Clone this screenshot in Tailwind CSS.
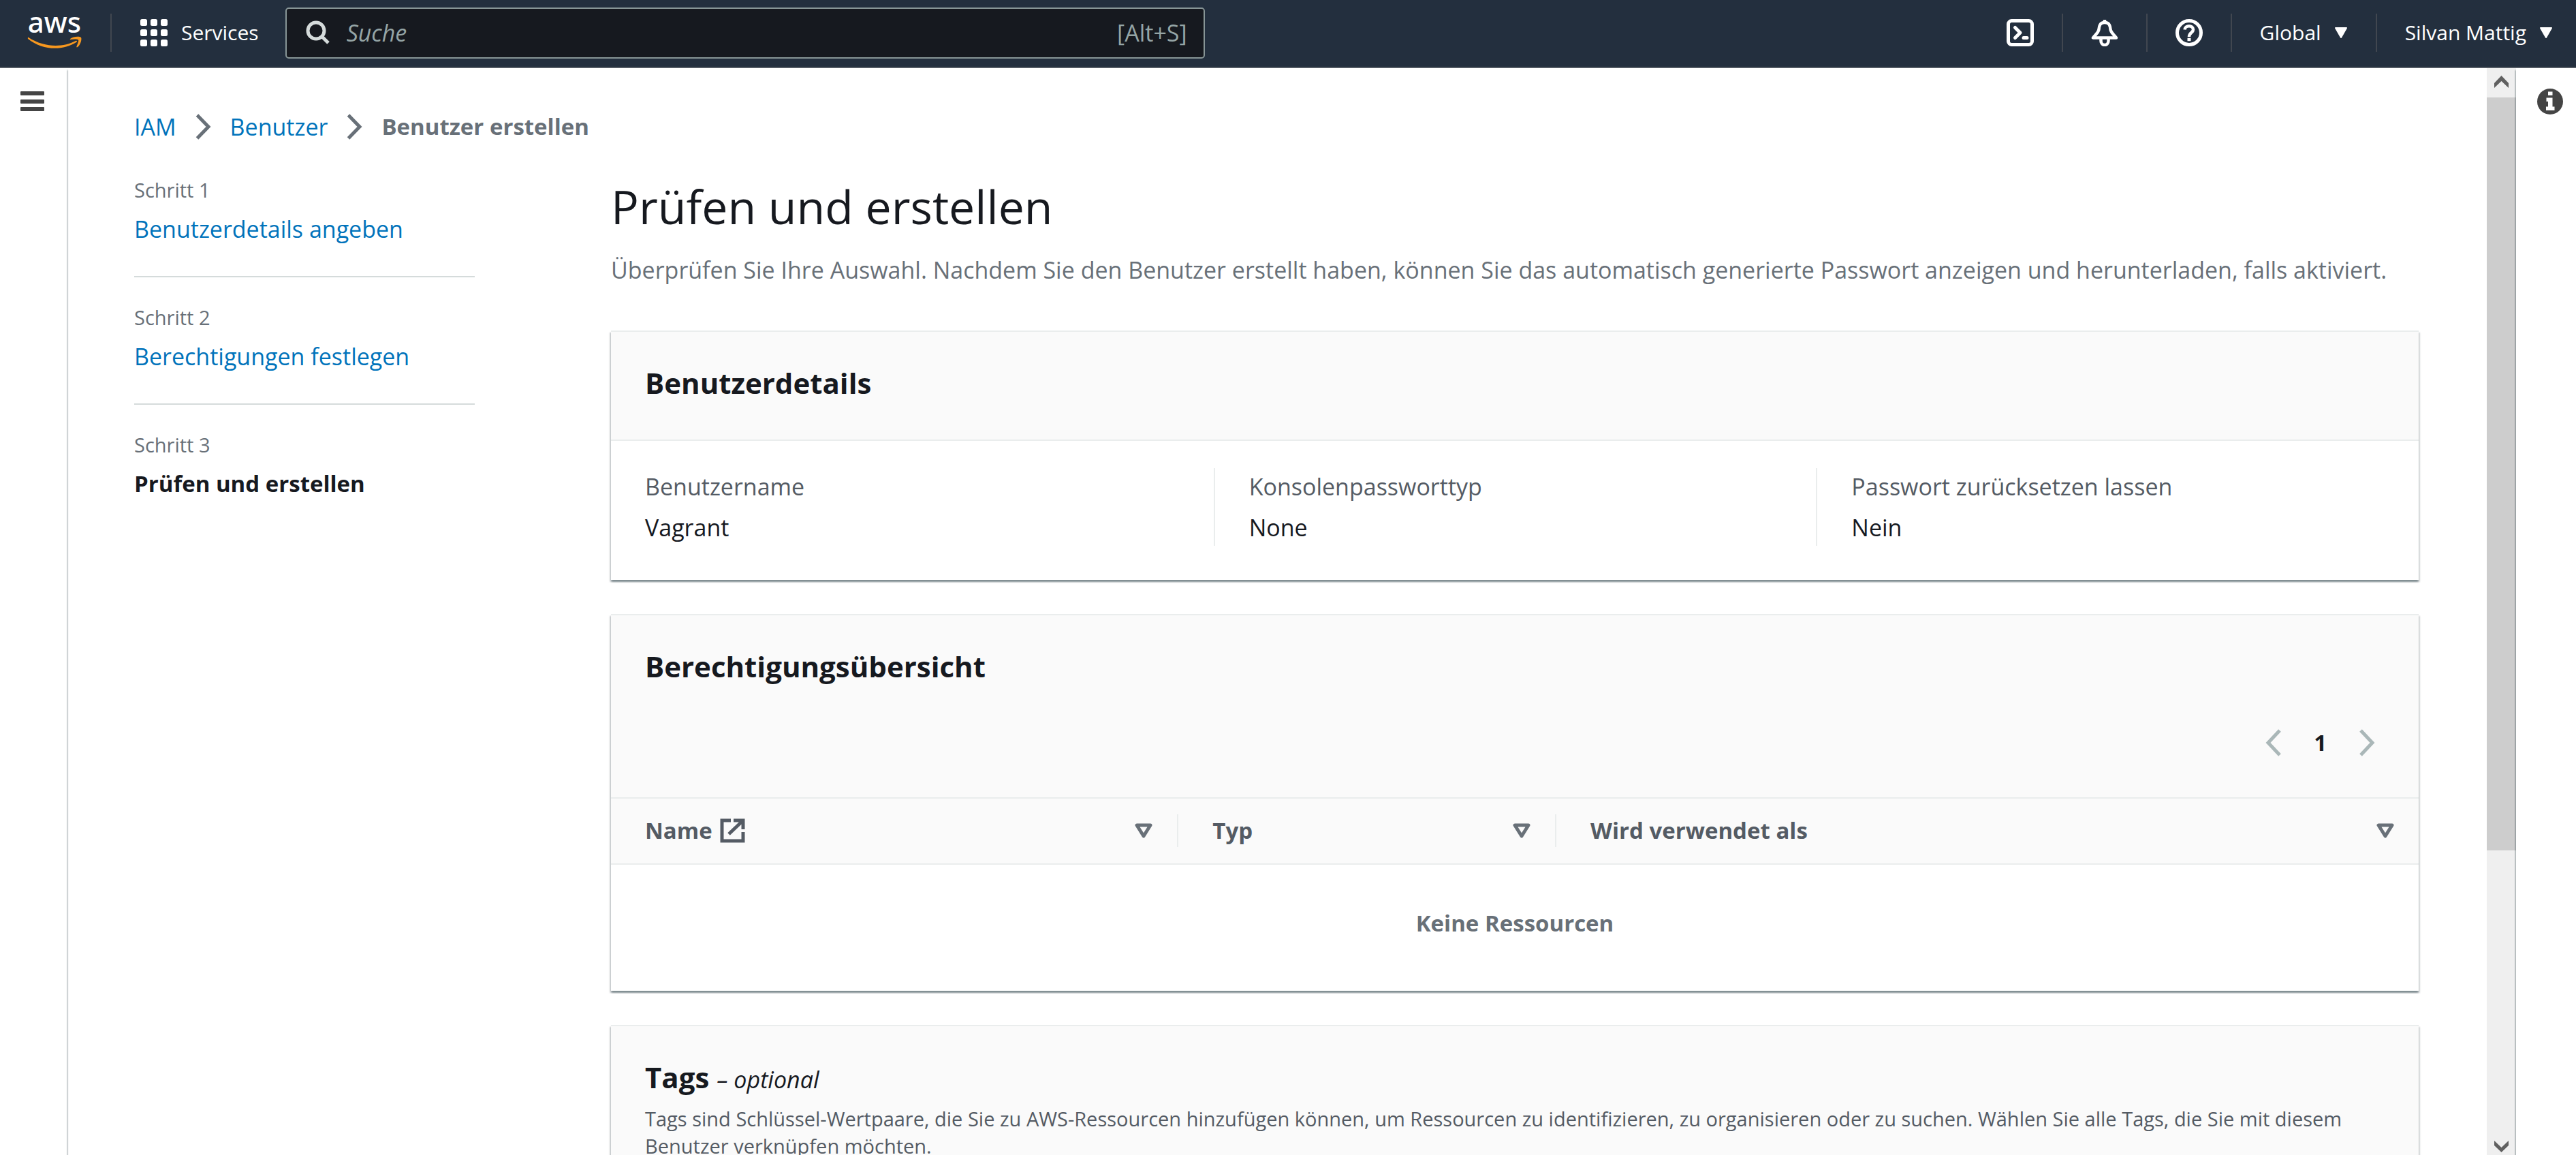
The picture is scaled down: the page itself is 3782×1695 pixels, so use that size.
<!DOCTYPE html>
<html lang="de">
<head>
<meta charset="utf-8">
<meta name="viewport" content="width=device-width, initial-scale=1">
<title>Benutzer erstellen | IAM</title>
<script src="https://cdn.jsdelivr.net/npm/@tailwindcss/browser@4"></script>
</head>
<body class="flex h-screen flex-col overflow-hidden bg-white font-['Open_Sans','Noto_Sans',sans-serif] text-[34px] leading-[50px] text-[#16191f]">

<header class="flex h-[100px] flex-none items-center border-b-2 border-[#545b64] bg-[#232f3e] pr-[34px] pb-[2px] pl-[41px] text-[30px] leading-[40px] text-white">
  <a href="#" aria-label="AWS" class="block flex-none">
    <svg class="block h-[48px] w-[79px] overflow-visible" viewBox="0 0 79 48">
      <text x="39" y="24" text-anchor="middle" font-family="Noto Sans, sans-serif" font-size="42" font-weight="500" fill="#fff">aws</text>
      <path d="M1 31 C24 46 51 46 70 36 C72 35 73 37 71 38 C51 51 21 50 0 33 C-.4 31.500 0 30.500 1 31 Z" fill="#f7981f"/>
      <path d="M62 33 C67 29 76 29 78 31 C79.500 34 77 42 73 45 C71.500 46 71 45 71.500 44 C73 40 75 36 74 34.500 C72 33 67 33.500 63 34 C61.500 34 61.500 33.500 62 33 Z" fill="#f7981f"/>
    </svg>
  </a>
  <div class="mx-[42px] h-[56px] w-[2px] flex-none bg-[#414750]"></div>
  <button type="button" class="flex flex-none items-center gap-[20px]">
    <svg class="h-[40px] w-[40px]" viewBox="0 0 16 16" fill="#fff">
      <rect width="4" height="4" rx="1"/><rect x="6" width="4" height="4" rx="1"/><rect x="12" width="4" height="4" rx="1"/>
      <rect y="6" width="4" height="4" rx="1"/><rect x="6" y="6" width="4" height="4" rx="1"/><rect x="12" y="6" width="4" height="4" rx="1"/>
      <rect y="12" width="4" height="4" rx="1"/><rect x="6" y="12" width="4" height="4" rx="1"/><rect x="12" y="12" width="4" height="4" rx="1"/>
    </svg>
    <span>Services</span>
  </button>
  <label class="ml-[39px] flex h-[75px] w-[1350px] items-center gap-[24px] rounded-[5px] border-2 border-[#879596] bg-[#16191f] pr-[24px] pl-[28px] text-[34px] text-[#95a5a6]">
    <svg class="h-[36px] w-[36px] flex-none" viewBox="0 0 36 36" fill="none" stroke="#d5dbdb" stroke-width="5"><circle cx="15" cy="15" r="12"/><path d="M23.500 23.500 L33 33"/></svg>
    <input type="search" aria-label="Suche" placeholder="Suche" class="min-w-0 flex-1 bg-transparent italic outline-none placeholder:text-[#95a5a6]">
    <span>[Alt+S]</span>
  </label>
  <nav class="ml-auto flex flex-none items-center gap-[41px]">
    <button type="button" aria-label="CloudShell"><svg class="block h-[40px] w-[40px]" viewBox="0 0 16 16" fill="none" stroke="#fff" stroke-width="2"><rect x="1" y="1" width="14" height="14" rx="2"/><path d="M5 5 L8 8 L5 11 M10 11 H12" stroke-linecap="round" stroke-linejoin="round"/></svg></button>
    <div class="h-[56px] w-[2px] bg-[#414750]"></div>
    <button type="button" aria-label="Benachrichtigungen"><svg class="block h-[40px] w-[40px]" viewBox="0 0 40 40" fill="none" stroke="#fff" stroke-width="4.500" stroke-linejoin="round"><path d="M20 1 V5"/><path d="M20 5 C13 5 12 10 11.500 15 C11 20 6 23 3 27.500 H37 C34 23 29 20 28.500 15 C28 10 27 5 20 5 Z"/><path d="M14.500 28 V32 C14.500 40 25.500 40 25.500 32 V28"/></svg></button>
    <div class="h-[56px] w-[2px] bg-[#414750]"></div>
    <button type="button" aria-label="Hilfe"><svg class="block h-[40px] w-[40px]" viewBox="0 0 40 40" fill="none" stroke="#fff" stroke-width="5"><circle cx="20" cy="20" r="17.500"/><path d="M13.500 15.500 C14 8.500 26 8.500 26 15.500 C26 20 20 19.500 20 26" stroke-width="4.500"/><path d="M17.500 30 H22.500" stroke-width="4.500"/></svg></button>
    <div class="h-[56px] w-[2px] bg-[#414750]"></div>
    <button type="button" class="flex items-center gap-[19px]">Global<svg class="h-[16px] w-[20px]" viewBox="0 0 20 16"><path d="M2 1 H18 L10 15 Z" fill="#fff" stroke="#fff" stroke-width="2" stroke-linejoin="round"/></svg></button>
    <div class="h-[56px] w-[2px] bg-[#414750]"></div>
    <button type="button" class="flex items-center gap-[19px]">Silvan Mattig<svg class="h-[16px] w-[20px]" viewBox="0 0 20 16"><path d="M2 1 H18 L10 15 Z" fill="#fff" stroke="#fff" stroke-width="2" stroke-linejoin="round"/></svg></button>
  </nav>
</header>

<div class="flex min-h-0 flex-1">
  <aside class="z-10 w-[98px] flex-none bg-white pt-[33px] pl-[30px] shadow-[1px_3px_2px_rgba(0,28,36,0.4)]">
    <button type="button" aria-label="Navigation öffnen" class="block"><svg class="block h-[32px] w-[35px]" viewBox="0 0 35 32" fill="#444"><rect y="1" width="35" height="6" rx="1"/><rect y="13" width="35" height="6" rx="1"/><rect y="24" width="35" height="6" rx="1"/></svg></button>
  </aside>

  <div class="min-w-0 flex-1 overflow-hidden pt-[61px] pr-[100px] pl-[99px]">
    <nav aria-label="Brotkrümelnavigation">
      <ol class="flex items-center gap-[28px]">
        <li><a href="#" class="text-[#0073bb]">IAM</a></li>
        <li aria-hidden="true"><svg class="h-[38px] w-[23px]" viewBox="0 0 23 38" fill="none" stroke="#687078" stroke-width="5"><path d="M2.500 2 L19 19 L2.500 36"/></svg></li>
        <li><a href="#" class="text-[#0073bb]">Benutzer</a></li>
        <li aria-hidden="true"><svg class="h-[38px] w-[23px]" viewBox="0 0 23 38" fill="none" stroke="#687078" stroke-width="5"><path d="M2.500 2 L19 19 L2.500 36"/></svg></li>
        <li class="text-[33px] font-bold text-[#687078]">Benutzer erstellen</li>
      </ol>
    </nav>

    <div class="mt-[48px] flex items-start gap-[200px]">
      <ol class="w-[500px] flex-none">
        <li class="border-b-2 border-[#d5dbdb] pb-[44px]">
          <div class="mb-[12px] text-[29px] leading-[40px] text-[#687078]">Schritt 1</div>
          <a href="#" class="block text-[#0073bb]">Benutzerdetails angeben</a>
        </li>
        <li class="border-b-2 border-[#d5dbdb] pt-[39px] pb-[44px]">
          <div class="mb-[12px] text-[29px] leading-[40px] text-[#687078]">Schritt 2</div>
          <a href="#" class="block text-[#0073bb]">Berechtigungen festlegen</a>
        </li>
        <li class="pt-[39px]">
          <div class="mb-[12px] text-[29px] leading-[40px] text-[#687078]">Schritt 3</div>
          <div class="text-[33px] font-bold">Prüfen und erstellen</div>
        </li>
      </ol>

      <main class="min-w-0 flex-1">
        <h1 class="text-[68px] leading-[88px]">Prüfen und erstellen</h1>
        <p class="mt-[24px] text-[#687078]">Überprüfen Sie Ihre Auswahl. Nachdem Sie den Benutzer erstellt haben, können Sie das automatisch generierte Passwort anzeigen und herunterladen, falls aktiviert.</p>

        <section class="mt-[64px] border-t-2 border-[#eaeded] bg-white pb-[50px] shadow-[0_3px_2px_rgba(0,28,36,0.3),2px_3px_2px_rgba(0,28,36,0.15),-2px_3px_2px_rgba(0,28,36,0.15)]">
          <div class="border-b-2 border-[#eaeded] bg-[#fafafa] px-[50px] pt-[47px] pb-[55px]">
            <h2 class="text-[42px] leading-[56px] font-bold">Benutzerdetails</h2>
          </div>
          <dl class="mt-[40px] grid grid-cols-3">
            <div class="py-[2px] pl-[50px]"><dt class="mb-[10px] text-[#545b64]">Benutzername</dt><dd>Vagrant</dd></div>
            <div class="border-l-2 border-[#eaeded] py-[2px] pl-[50px]"><dt class="mb-[10px] text-[#545b64]">Konsolenpassworttyp</dt><dd>None</dd></div>
            <div class="border-l-2 border-[#eaeded] py-[2px] pl-[50px]"><dt class="mb-[10px] text-[#545b64]">Passwort zurücksetzen lassen</dt><dd>Nein</dd></div>
          </dl>
        </section>

        <section class="mt-[50px] border-t-2 border-[#eaeded] bg-white shadow-[0_3px_2px_rgba(0,28,36,0.3),2px_3px_2px_rgba(0,28,36,0.15),-2px_3px_2px_rgba(0,28,36,0.15)]">
          <div class="bg-[#fafafa] px-[50px] pt-[47px] pb-[55px]">
            <h2 class="text-[42px] leading-[56px] font-bold">Berechtigungsübersicht</h2>
            <div class="mt-[59px] flex items-center justify-end gap-[48px] pr-[14px]">
              <button type="button" aria-label="Vorherige Seite"><svg class="block h-[42px] w-[23px]" viewBox="0 0 23 42" fill="none" stroke="#aab7b8" stroke-width="5"><path d="M21 3 L4 21 L21 39"/></svg></button>
              <button type="button" class="text-[33px] font-bold">1</button>
              <button type="button" aria-label="Nächste Seite"><svg class="block h-[42px] w-[23px]" viewBox="0 0 23 42" fill="none" stroke="#aab7b8" stroke-width="5"><path d="M2 3 L19 21 L2 39"/></svg></button>
            </div>
          </div>
          <table class="w-full table-fixed border-collapse">
            <thead class="bg-[#fafafa] text-left text-[33px] leading-[48px] text-[#545b64]">
              <tr class="border-y-2 border-[#eaeded]">
                <th scope="col" class="w-[31.4%] px-0 pt-[23px] pb-[24px] font-bold">
                  <button type="button" class="flex w-full items-center border-r-2 border-[#eaeded] pr-[36px] pl-[50px]">Name<svg class="ml-[11px] h-[36px] w-[37px]" viewBox="0 0 37 36" fill="none" stroke="#545b64" stroke-width="5"><path d="M16 3 H3 V33 H34 V20 M20 3 H34 V16 M34 3 L13 23"/></svg><svg class="ml-auto h-[22px] w-[26px]" viewBox="0 0 26 22" fill="none" stroke="#687078" stroke-width="5" stroke-linejoin="round"><path d="M3 3 H23 L13 19 Z"/></svg></button>
                </th>
                <th scope="col" class="w-[20.9%] px-0 pt-[23px] pb-[24px] font-bold">
                  <button type="button" class="flex w-full items-center justify-between border-r-2 border-[#eaeded] pr-[36px] pl-[50px]">Typ<svg class="h-[22px] w-[26px]" viewBox="0 0 26 22" fill="none" stroke="#687078" stroke-width="5" stroke-linejoin="round"><path d="M3 3 H23 L13 19 Z"/></svg></button>
                </th>
                <th scope="col" class="px-0 pt-[23px] pb-[24px] font-bold">
                  <button type="button" class="flex w-full items-center justify-between pr-[36px] pl-[50px]">Wird verwendet als<svg class="h-[22px] w-[26px]" viewBox="0 0 26 22" fill="none" stroke="#687078" stroke-width="5" stroke-linejoin="round"><path d="M3 3 H23 L13 19 Z"/></svg></button>
                </th>
              </tr>
            </thead>
            <tbody>
              <tr><td colspan="3" class="pt-[61px] pb-[74px] text-center text-[33px] font-bold text-[#687078]">Keine Ressourcen</td></tr>
            </tbody>
          </table>
        </section>

        <section class="mt-[50px] border-t-2 border-[#eaeded] bg-white shadow-[0_3px_2px_rgba(0,28,36,0.3),2px_3px_2px_rgba(0,28,36,0.15),-2px_3px_2px_rgba(0,28,36,0.15)]">
          <div class="border-b-2 border-[#eaeded] bg-[#fafafa] px-[50px] pt-[47px] pb-[55px]">
            <h2 class="text-[42px] leading-[56px] font-bold">Tags <span class="text-[34px] font-normal italic">– optional</span></h2>
            <p class="mt-[10px] text-[29px] leading-[40px] text-[#545b64]">Tags sind Schlüssel-Wertpaare, die Sie zu AWS-Ressourcen hinzufügen können, um Ressourcen zu identifizieren, zu organisieren oder zu suchen. Wählen Sie alle Tags, die Sie mit diesem Benutzer verknüpfen möchten.</p>
          </div>
        </section>
      </main>
    </div>
  </div>

  <!-- Scrollbar of the content pane -->
  <div aria-hidden="true" class="flex w-[43px] flex-none flex-col bg-[#efefef]">
    <svg class="h-[43px] w-[43px] flex-none" viewBox="0 0 43 43"><path d="M11 22 L21.500 11 L32 22 V29 L21.500 19 L11 29 Z" fill="#606060"/></svg>
    <div class="min-h-0 flex-1"><div class="h-[73.2%] bg-[#cdcdcd]"></div></div>
    <svg class="h-[43px] w-[43px] flex-none" viewBox="0 0 43 43"><path d="M11 22 L21.500 32 L32 22 V29 L21.500 39 L11 29 Z" fill="#606060"/></svg>
  </div>

  <aside class="z-10 w-[88px] flex-none bg-white pt-[30px] pl-[31px] shadow-[-1px_3px_2px_rgba(0,28,36,0.4)]">
    <button type="button" aria-label="Hilfebereich öffnen" class="block"><svg class="block h-[38px] w-[38px]" viewBox="0 0 38 38"><circle cx="19" cy="19" r="19" fill="#444"/><path d="M16 4.500 H22.500 V10 H16 Z M13.500 13.500 H22.500 V26.500 H25.500 V32 H13 V26.500 H16 V19 H13.500 Z" fill="#fff"/></svg></button>
  </aside>
</div>
</body>
</html>
